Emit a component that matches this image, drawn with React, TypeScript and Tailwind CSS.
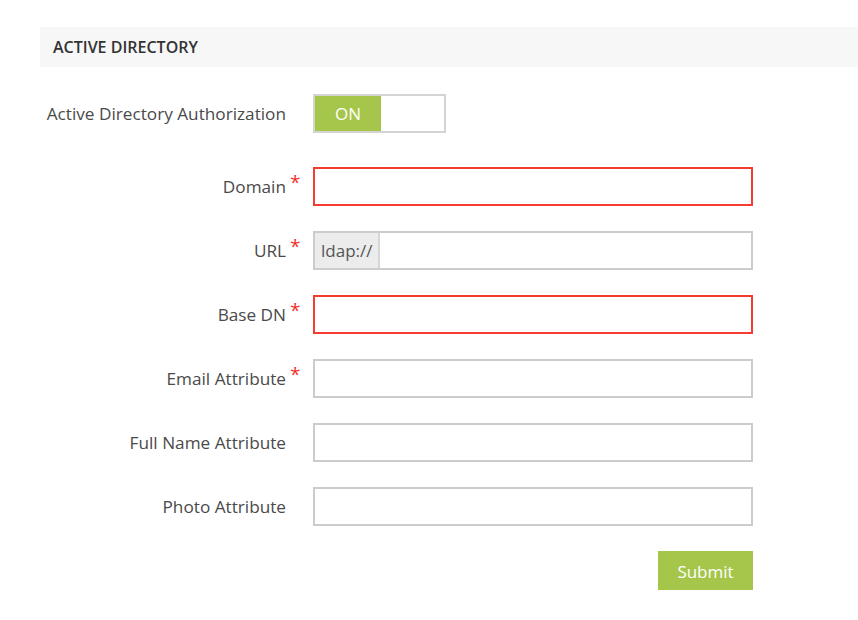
import React from 'react'

const fields = [
  { label: 'Domain', required: true, error: true },
  { label: 'URL', required: true, addon: 'ldap://' },
  { label: 'Base DN', required: true, error: true },
  { label: 'Email Attribute', required: true },
  { label: 'Full Name Attribute' },
  { label: 'Photo Attribute' },
]

type Field = { label: string; required?: boolean; error?: boolean; addon?: string }

function Label({ text, required }: { text: string; required?: boolean }) {
  return (
    <div className="w-[246px] flex-shrink-0 text-right">
      <span className="relative text-[17.2px] text-[#4a4a4a]">
        {text}
        {required && (
          <span className="absolute left-[calc(100%+4px)] -top-[7px] text-[19px] text-[#f0322a]">*</span>
        )}
      </span>
    </div>
  )
}

function FieldRow({ field }: { field: Field }) {
  const border = field.error ? 'border-[#f53b32]' : 'border-[#cccccc]'
  return (
    <div className="flex items-center gap-[27px]">
      <Label text={field.label} required={field.required} />
      <div className={`flex h-[39px] w-[440px] border-2 ${border} bg-white`}>
        {field.addon && (
          <div className="flex items-center px-[6px] bg-[#ececec] border-r-2 border-[#d6d6d6] text-[17px] text-[#555]">
            {field.addon}
          </div>
        )}
        <input className="flex-1 min-w-0 outline-none bg-transparent px-2 text-[15px]" />
      </div>
    </div>
  )
}

export default function App() {
  return (
    <div className="min-h-screen bg-white pl-[40px] pt-[27px]" style={{ fontFamily: '"Open Sans", sans-serif' }}>
      {/* Section header */}
      <div className="h-[40px] bg-[#f7f7f7] flex items-center pl-[13px]">
        <span className="text-[16px] font-semibold text-[#333]">ACTIVE DIRECTORY</span>
      </div>

      {/* Toggle */}
      <div className="mt-[27px] flex items-center gap-[27px]">
        <Label text="Active Directory Authorization" />
        <div className="flex h-[39px] w-[133px] border-2 border-[#d4d4d4]">
          <div className="w-[66px] bg-[#a5c64a] flex items-center justify-center text-white text-[17px]">ON</div>
          <div className="flex-1 bg-white" />
        </div>
      </div>

      <div className="mt-[34px] flex flex-col gap-[25px]">
        {fields.map((f) => (
          <FieldRow key={f.label} field={f} />
        ))}
        <div className="flex pl-[618px]">
          <button className="h-[39px] w-[95px] bg-[#a5c64a] text-white text-[17px] pt-[2px]">Submit</button>
        </div>
      </div>
    </div>
  )
}
